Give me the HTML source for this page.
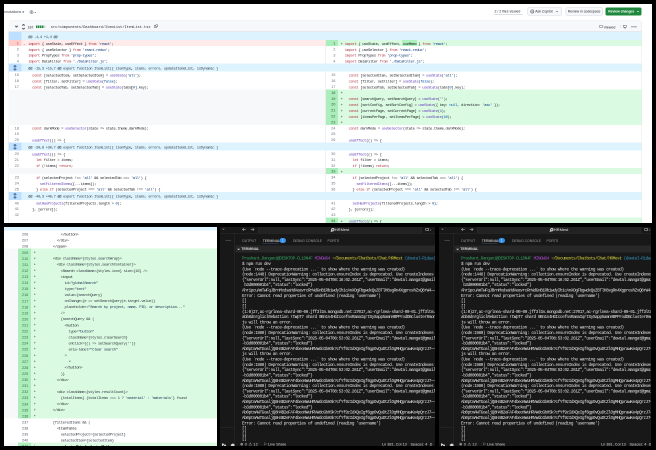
<!DOCTYPE html><html><head><meta charset='utf-8'><style>
*{box-sizing:border-box;margin:0;padding:0}
html,body{width:656px;height:450px;overflow:hidden;background:#000}
.a{position:absolute}
.t{position:absolute;white-space:pre;line-height:1}
.b{font-weight:bold}
.m{font-family:'Liberation Mono',monospace}
.s{font-family:'Liberation Sans',sans-serif}
.k{color:#b03a46}.f{color:#6a45b8}.st{color:#0f3b7a}.c{color:#1f2328}.n{color:#0550ae}
</style></head><body>
<div class='a' style='left:4px;top:4px;width:1296.000px;height:438.000px;background:#fff;overflow:hidden;transform:scale(0.500000);transform-origin:0 0;will-change:transform'>
<div class='t s' style='left:0.400px;top:12.400px;font-size:7.400px;color:#3d444d'>nnotations</div>
<svg class='a' style='left:36.400px;top:14.600px' width='4.800' height='3.200' viewBox='0 0 2.4 1.6'><path d='M0 0H2.4L1.2 1.4Z' fill='#3d444d'/></svg>
<svg class='a' style='left:49.600px;top:11.200px' width='10.000' height='10.000' viewBox='0 0 5 5'><circle cx='2.5' cy='2.5' r='1.5' stroke='#6e7781' stroke-width='0.900' fill='none' stroke-dasharray='0.6 0.4'/><circle cx='2.5' cy='2.5' r='0.45' fill='none' stroke='#6e7781' stroke-width='0.600'/></svg>
<svg class='a' style='left:60.800px;top:16.000px' width='3.200' height='2.400' viewBox='0 0 1.6 1.2'><path d='M0 0H1.6L0.8 1.1Z' fill='#59636e'/></svg>
<div class='t s' style='left:981.000px;top:11.200px;font-size:7.000px;color:#25292e'>2 / 2 files viewed</div>
<div class='a' style='left:979.000px;top:19.600px;width:58.000px;height:1.400px;background:#b8bec4'></div>
<div class='a' style='left:1047.000px;top:6.600px;width:69.000px;height:16.400px;border:1.000px solid #d1d9e0;border-radius:3.000px;background:#f6f8fa'></div>
<svg class='a' style='left:1052.400px;top:10.800px' width='8.800' height='8.000' viewBox='0 0 4.4 4'><circle cx='2.2' cy='2' r='1.6' stroke='#6e7781' stroke-width='0.700' fill='none'/><path d='M1.3 2.3H3.1' stroke='#6e7781' stroke-width='0.600'/></svg>
<div class='t s' style='left:1062.400px;top:12.400px;font-size:6.900px;color:#25292e'>Ask Copilot</div>
<svg class='a' style='left:1104.000px;top:14.400px' width='4.000' height='2.800' viewBox='0 0 2 1.4'><path d='M0 0H2L1 1.2Z' fill='#59636e'/></svg>
<div class='a' style='left:1123.200px;top:6.600px;width:74.800px;height:16.400px;border:1.000px solid #d1d9e0;border-radius:3.000px;background:#f6f8fa'></div>
<div class='t s' style='left:1127.600px;top:12.400px;font-size:6.900px;color:#25292e'>Review in codespace</div>
<div class='a' style='left:1203.400px;top:6.600px;width:72.000px;height:16.400px;border-radius:3.000px;background:#1f883d'></div>
<div class='t s' style='left:1208.400px;top:12.400px;font-size:6.700px;color:#fff;font-weight:bold'>Review changes</div>
<svg class='a' style='left:1266.400px;top:14.400px' width='4.000' height='2.800' viewBox='0 0 2 1.4'><path d='M0 0H2L1 1.2Z' fill='#fff'/></svg>
<div class='a' style='left:8.600px;top:33.000px;width:1267.400px;height:410.000px;border:1.000px solid #e3e7eb;border-radius:4.000px 4.000px 0 0'></div>
<div class='a' style='left:9.200px;top:33.600px;width:1266.000px;height:22.600px;background:#f6f8fa;border-bottom:1.200px solid #d1d9e0'></div>
<svg class='a' style='left:21.600px;top:42.800px' width='6.000' height='4.000' viewBox='0 0 3 2'><path d='M0.3 0.3L1.5 1.5L2.7 0.3' stroke='#59636e' stroke-width='1.200' fill='none'/></svg>
<svg class='a' style='left:35.600px;top:39.600px' width='6.000' height='11.200' viewBox='0 0 3 5.6'><path d='M0.3 1.6L1.5 0.4L2.7 1.6M0.3 4L1.5 5.2L2.7 4' stroke='#59636e' stroke-width='1.100' fill='none'/></svg>
<div class='t s' style='left:47.000px;top:42.800px;font-size:7.200px;color:#1f2328'>187</div>
<div class='a' style='left:63.600px;top:43.200px;width:3.400px;height:4.800px;background:#1f883d'></div>
<div class='a' style='left:67.700px;top:43.200px;width:3.400px;height:4.800px;background:#1f883d'></div>
<div class='a' style='left:71.800px;top:43.200px;width:3.400px;height:4.800px;background:#1f883d'></div>
<div class='a' style='left:75.900px;top:43.200px;width:3.400px;height:4.800px;background:#1f883d'></div>
<div class='a' style='left:80.000px;top:43.200px;width:3.400px;height:4.800px;background:#d1d9e0'></div>
<div class='t m' style='left:93.400px;top:43.000px;font-size:7.240px;color:#1f2328'>src/components/Dashboard/ItemList/ItemList.tsx</div>
<div class='a' style='left:300.400px;top:42.400px;width:5.600px;height:5.600px;border:0.900px solid #59636e;border-radius:1.000px'></div>
<div class='a' style='left:302.800px;top:40.800px;width:4.800px;height:4.800px;border:0.900px solid #59636e;border-radius:1.000px;background:#f6f8fa'></div>
<div class='a' style='left:1191.200px;top:42.400px;width:6.000px;height:6.000px;border:0.900px solid #59636e;border-radius:1.000px;background:#fff'></div>
<div class='t s' style='left:1199.200px;top:42.800px;font-size:7.200px;color:#1f2328'>Viewed</div>
<div class='a' style='left:1231.600px;top:41.200px;width:1.000px;height:8.000px;background:#d1d9e0'></div>
<div class='a' style='left:1238.400px;top:42.200px;width:6.800px;height:5.200px;border:0.900px solid #59636e;border-radius:0.800px'></div>
<div class='a' style='left:1240.800px;top:47.200px;width:2.000px;height:1.600px;background:#59636e'></div>
<div class='a' style='left:1254.800px;top:44.400px;width:2.200px;height:2.200px;border-radius:1.100px;background:#59636e'></div>
<div class='a' style='left:1259.000px;top:44.400px;width:2.200px;height:2.200px;border-radius:1.100px;background:#59636e'></div>
<div class='a' style='left:1263.200px;top:44.400px;width:2.200px;height:2.200px;border-radius:1.100px;background:#59636e'></div>
<div class='a' style='left:9.200px;top:56.200px;width:1266.200px;height:16.000px;background:#ddf4ff'></div>
<div class='a' style='left:9.200px;top:56.200px;width:26.200px;height:16.000px;background:#bedfff'></div>
<div class='t m' style='left:48.600px;top:62.800px;font-size:7.700px;letter-spacing:-0.740px;color:#3b4450'>@@ -1,4 +1,4 @@</div>
<div class='a' style='left:9.200px;top:72.200px;width:633.400px;height:11.800px;background:#ffebe9'></div>
<div class='a' style='left:9.200px;top:72.200px;width:26.200px;height:11.800px;background:#ffcecb'></div>
<div class='t s' style='left:9.200px;width:20.600px;text-align:right;top:75.200px;font-size:7.800px;letter-spacing:-0.100px;color:#a8454e'>1</div>
<div class='t m' style='left:38.400px;top:76.800px;font-size:7.700px;letter-spacing:-0.740px;color:#1f2328'>-</div>
<div class='t m c' style='left:48.600px;top:76.800px;font-size:7.700px;letter-spacing:-0.740px'><span class='k'>import</span> { useState, useEffect } <span class='k'>from</span> <span class='st'>&#x27;react&#x27;</span>;</div>
<div class='a' style='left:642.600px;top:72.200px;width:632.800px;height:11.800px;background:#dafbe1'></div>
<div class='a' style='left:642.600px;top:72.200px;width:25.000px;height:11.800px;background:#aceebb'></div>
<div class='a' style='left:795.600px;top:72.400px;width:30.000px;height:11.200px;background:#abf2bc;border-radius:1.200px'></div>
<div class='t s' style='left:642.600px;width:20.200px;text-align:right;top:75.200px;font-size:7.800px;letter-spacing:-0.100px;color:#2f5e3d'>1</div>
<div class='t m' style='left:673.200px;top:76.800px;font-size:7.700px;letter-spacing:-0.740px;color:#1f2328'>+</div>
<div class='t m c' style='left:681.600px;top:76.800px;font-size:7.700px;letter-spacing:-0.740px'><span class='k'>import</span> { useState, useEffect, useMemo } <span class='k'>from</span> <span class='st'>&#x27;react&#x27;</span>;</div>
<div class='t s' style='left:9.200px;width:20.600px;text-align:right;top:87.000px;font-size:7.800px;letter-spacing:-0.100px;color:#6e7781'>2</div>
<div class='t m c' style='left:48.600px;top:88.600px;font-size:7.700px;letter-spacing:-0.740px'><span class='k'>import</span> { useSelector } <span class='k'>from</span> <span class='st'>&#x27;react-redux&#x27;</span>;</div>
<div class='t s' style='left:642.600px;width:20.200px;text-align:right;top:87.000px;font-size:7.800px;letter-spacing:-0.100px;color:#6e7781'>2</div>
<div class='t m c' style='left:681.600px;top:88.600px;font-size:7.700px;letter-spacing:-0.740px'><span class='k'>import</span> { useSelector } <span class='k'>from</span> <span class='st'>&#x27;react-redux&#x27;</span>;</div>
<div class='t s' style='left:9.200px;width:20.600px;text-align:right;top:98.800px;font-size:7.800px;letter-spacing:-0.100px;color:#6e7781'>3</div>
<div class='t m c' style='left:48.600px;top:100.400px;font-size:7.700px;letter-spacing:-0.740px'><span class='k'>import</span> PropTypes <span class='k'>from</span> <span class='st'>&#x27;prop-types&#x27;</span>;</div>
<div class='t s' style='left:642.600px;width:20.200px;text-align:right;top:98.800px;font-size:7.800px;letter-spacing:-0.100px;color:#6e7781'>3</div>
<div class='t m c' style='left:681.600px;top:100.400px;font-size:7.700px;letter-spacing:-0.740px'><span class='k'>import</span> PropTypes <span class='k'>from</span> <span class='st'>&#x27;prop-types&#x27;</span>;</div>
<div class='t s' style='left:9.200px;width:20.600px;text-align:right;top:110.600px;font-size:7.800px;letter-spacing:-0.100px;color:#6e7781'>4</div>
<div class='t m c' style='left:48.600px;top:112.200px;font-size:7.700px;letter-spacing:-0.740px'><span class='k'>import</span> DataFilter <span class='k'>from</span> <span class='st'>&#x27;./DataFilter.js&#x27;</span>;</div>
<div class='t s' style='left:642.600px;width:20.200px;text-align:right;top:110.600px;font-size:7.800px;letter-spacing:-0.100px;color:#6e7781'>4</div>
<div class='t m c' style='left:681.600px;top:112.200px;font-size:7.700px;letter-spacing:-0.740px'><span class='k'>import</span> DataFilter <span class='k'>from</span> <span class='st'>&#x27;./DataFilter.js&#x27;</span>;</div>
<div class='a' style='left:9.200px;top:119.400px;width:1266.200px;height:16.000px;background:#ddf4ff'></div>
<div class='a' style='left:9.200px;top:119.400px;width:26.200px;height:16.000px;background:#bedfff'></div>
<svg class='a' style='left:18.400px;top:122.200px' width='8.000' height='11.200' viewBox='0 0 4 5.6'><path d='M2 0.3V5.3M0.6 1.7L2 0.3L3.4 1.7M0.6 3.9L2 5.3L3.4 3.9' stroke='#4a6f93' stroke-width='0.900' fill='none'/></svg>
<div class='t m' style='left:48.600px;top:126.000px;font-size:7.700px;letter-spacing:-0.740px;color:#3b4450'>@@ -15,3 +15,7 @@ export function ItemList({ itemType, items, errors, updateItemsList, isDynamic }</div>
<div class='t s' style='left:9.200px;width:20.600px;text-align:right;top:138.400px;font-size:7.800px;letter-spacing:-0.100px;color:#6e7781'>15</div>
<div class='t m c' style='left:48.600px;top:140.000px;font-size:7.700px;letter-spacing:-0.740px'>  <span class='k'>const</span> [selectedItem, setSelectedItem] = <span class='f'>useState</span>(<span class='st'>&#x27;all&#x27;</span>);</div>
<div class='t s' style='left:642.600px;width:20.200px;text-align:right;top:138.400px;font-size:7.800px;letter-spacing:-0.100px;color:#6e7781'>15</div>
<div class='t m c' style='left:681.600px;top:140.000px;font-size:7.700px;letter-spacing:-0.740px'>  <span class='k'>const</span> [selectedItem, setSelectedItem] = <span class='f'>useState</span>(<span class='st'>&#x27;all&#x27;</span>);</div>
<div class='t s' style='left:9.200px;width:20.600px;text-align:right;top:150.200px;font-size:7.800px;letter-spacing:-0.100px;color:#6e7781'>16</div>
<div class='t m c' style='left:48.600px;top:151.800px;font-size:7.700px;letter-spacing:-0.740px'>  <span class='k'>const</span> [filter, setFilter] = <span class='f'>useState</span>(<span class='n'>false</span>);</div>
<div class='t s' style='left:642.600px;width:20.200px;text-align:right;top:150.200px;font-size:7.800px;letter-spacing:-0.100px;color:#6e7781'>16</div>
<div class='t m c' style='left:681.600px;top:151.800px;font-size:7.700px;letter-spacing:-0.740px'>  <span class='k'>const</span> [filter, setFilter] = <span class='f'>useState</span>(<span class='n'>false</span>);</div>
<div class='t s' style='left:9.200px;width:20.600px;text-align:right;top:162.000px;font-size:7.800px;letter-spacing:-0.100px;color:#6e7781'>17</div>
<div class='t m c' style='left:48.600px;top:163.600px;font-size:7.700px;letter-spacing:-0.740px'>  <span class='k'>const</span> [selectedTab, setSelectedTab] = <span class='f'>useState</span>(tabs[<span class='n'>0</span>].key);</div>
<div class='t s' style='left:642.600px;width:20.200px;text-align:right;top:162.000px;font-size:7.800px;letter-spacing:-0.100px;color:#6e7781'>17</div>
<div class='t m c' style='left:681.600px;top:163.600px;font-size:7.700px;letter-spacing:-0.740px'>  <span class='k'>const</span> [selectedTab, setSelectedTab] = <span class='f'>useState</span>(tabs[<span class='n'>0</span>].key);</div>
<div class='a' style='left:9.200px;top:170.800px;width:633.400px;height:11.800px;background:#f6f8fa'></div>
<div class='a' style='left:642.600px;top:170.800px;width:632.800px;height:11.800px;background:#dafbe1'></div>
<div class='a' style='left:642.600px;top:170.800px;width:25.000px;height:11.800px;background:#aceebb'></div>
<div class='t s' style='left:642.600px;width:20.200px;text-align:right;top:173.800px;font-size:7.800px;letter-spacing:-0.100px;color:#2f5e3d'>18</div>
<div class='t m' style='left:673.200px;top:175.400px;font-size:7.700px;letter-spacing:-0.740px;color:#1f2328'>+</div>
<div class='t m c' style='left:681.600px;top:175.400px;font-size:7.700px;letter-spacing:-0.740px'></div>
<div class='a' style='left:9.200px;top:182.600px;width:633.400px;height:11.800px;background:#f6f8fa'></div>
<div class='a' style='left:642.600px;top:182.600px;width:632.800px;height:11.800px;background:#dafbe1'></div>
<div class='a' style='left:642.600px;top:182.600px;width:25.000px;height:11.800px;background:#aceebb'></div>
<div class='t s' style='left:642.600px;width:20.200px;text-align:right;top:185.600px;font-size:7.800px;letter-spacing:-0.100px;color:#2f5e3d'>19</div>
<div class='t m' style='left:673.200px;top:187.200px;font-size:7.700px;letter-spacing:-0.740px;color:#1f2328'>+</div>
<div class='t m c' style='left:681.600px;top:187.200px;font-size:7.700px;letter-spacing:-0.740px'>  <span class='k'>const</span> [searchQuery, setSearchQuery] = <span class='f'>useState</span>(<span class='st'>&#x27;&#x27;</span>);</div>
<div class='a' style='left:9.200px;top:194.400px;width:633.400px;height:11.800px;background:#f6f8fa'></div>
<div class='a' style='left:642.600px;top:194.400px;width:632.800px;height:11.800px;background:#dafbe1'></div>
<div class='a' style='left:642.600px;top:194.400px;width:25.000px;height:11.800px;background:#aceebb'></div>
<div class='t s' style='left:642.600px;width:20.200px;text-align:right;top:197.400px;font-size:7.800px;letter-spacing:-0.100px;color:#2f5e3d'>20</div>
<div class='t m' style='left:673.200px;top:199.000px;font-size:7.700px;letter-spacing:-0.740px;color:#1f2328'>+</div>
<div class='t m c' style='left:681.600px;top:199.000px;font-size:7.700px;letter-spacing:-0.740px'>  <span class='k'>const</span> [sortConfig, setSortConfig] = <span class='f'>useState</span>({ key: <span class='n'>null</span>, direction: <span class='st'>&#x27;asc&#x27;</span> });</div>
<div class='a' style='left:9.200px;top:206.200px;width:633.400px;height:11.800px;background:#f6f8fa'></div>
<div class='a' style='left:642.600px;top:206.200px;width:632.800px;height:11.800px;background:#dafbe1'></div>
<div class='a' style='left:642.600px;top:206.200px;width:25.000px;height:11.800px;background:#aceebb'></div>
<div class='t s' style='left:642.600px;width:20.200px;text-align:right;top:209.200px;font-size:7.800px;letter-spacing:-0.100px;color:#2f5e3d'>21</div>
<div class='t m' style='left:673.200px;top:210.800px;font-size:7.700px;letter-spacing:-0.740px;color:#1f2328'>+</div>
<div class='t m c' style='left:681.600px;top:210.800px;font-size:7.700px;letter-spacing:-0.740px'>  <span class='k'>const</span> [currentPage, setCurrentPage] = <span class='f'>useState</span>(<span class='n'>1</span>);</div>
<div class='a' style='left:9.200px;top:218.000px;width:633.400px;height:11.800px;background:#f6f8fa'></div>
<div class='a' style='left:642.600px;top:218.000px;width:632.800px;height:11.800px;background:#dafbe1'></div>
<div class='a' style='left:642.600px;top:218.000px;width:25.000px;height:11.800px;background:#aceebb'></div>
<div class='t s' style='left:642.600px;width:20.200px;text-align:right;top:221.000px;font-size:7.800px;letter-spacing:-0.100px;color:#2f5e3d'>22</div>
<div class='t m' style='left:673.200px;top:222.600px;font-size:7.700px;letter-spacing:-0.740px;color:#1f2328'>+</div>
<div class='t m c' style='left:681.600px;top:222.600px;font-size:7.700px;letter-spacing:-0.740px'>  <span class='k'>const</span> [itemsPerPage, setItemsPerPage] = <span class='f'>useState</span>(<span class='n'>1</span><span class='n'>0</span>);</div>
<div class='a' style='left:9.200px;top:229.800px;width:633.400px;height:11.800px;background:#f6f8fa'></div>
<div class='a' style='left:642.600px;top:229.800px;width:632.800px;height:11.800px;background:#dafbe1'></div>
<div class='a' style='left:642.600px;top:229.800px;width:25.000px;height:11.800px;background:#aceebb'></div>
<div class='t s' style='left:642.600px;width:20.200px;text-align:right;top:232.800px;font-size:7.800px;letter-spacing:-0.100px;color:#2f5e3d'>23</div>
<div class='t m' style='left:673.200px;top:234.400px;font-size:7.700px;letter-spacing:-0.740px;color:#1f2328'>+</div>
<div class='t m c' style='left:681.600px;top:234.400px;font-size:7.700px;letter-spacing:-0.740px'></div>
<div class='t s' style='left:9.200px;width:20.600px;text-align:right;top:244.600px;font-size:7.800px;letter-spacing:-0.100px;color:#6e7781'>18</div>
<div class='t m c' style='left:48.600px;top:246.200px;font-size:7.700px;letter-spacing:-0.740px'>  <span class='k'>const</span> darkMode = <span class='f'>useSelector</span>(state =&gt; state.theme.darkMode);</div>
<div class='t s' style='left:642.600px;width:20.200px;text-align:right;top:244.600px;font-size:7.800px;letter-spacing:-0.100px;color:#6e7781'>24</div>
<div class='t m c' style='left:681.600px;top:246.200px;font-size:7.700px;letter-spacing:-0.740px'>  <span class='k'>const</span> darkMode = <span class='f'>useSelector</span>(state =&gt; state.theme.darkMode);</div>
<div class='t s' style='left:9.200px;width:20.600px;text-align:right;top:256.400px;font-size:7.800px;letter-spacing:-0.100px;color:#6e7781'>19</div>
<div class='t m c' style='left:48.600px;top:258.000px;font-size:7.700px;letter-spacing:-0.740px'></div>
<div class='t s' style='left:642.600px;width:20.200px;text-align:right;top:256.400px;font-size:7.800px;letter-spacing:-0.100px;color:#6e7781'>25</div>
<div class='t m c' style='left:681.600px;top:258.000px;font-size:7.700px;letter-spacing:-0.740px'></div>
<div class='t s' style='left:9.200px;width:20.600px;text-align:right;top:268.200px;font-size:7.800px;letter-spacing:-0.100px;color:#6e7781'>20</div>
<div class='t m c' style='left:48.600px;top:269.800px;font-size:7.700px;letter-spacing:-0.740px'>  <span class='f'>useEffect</span>(() =&gt; {</div>
<div class='t s' style='left:642.600px;width:20.200px;text-align:right;top:268.200px;font-size:7.800px;letter-spacing:-0.100px;color:#6e7781'>26</div>
<div class='t m c' style='left:681.600px;top:269.800px;font-size:7.700px;letter-spacing:-0.740px'>  <span class='f'>useEffect</span>(() =&gt; {</div>
<div class='a' style='left:9.200px;top:277.000px;width:1266.200px;height:16.000px;background:#ddf4ff'></div>
<div class='a' style='left:9.200px;top:277.000px;width:26.200px;height:16.000px;background:#bedfff'></div>
<svg class='a' style='left:18.400px;top:279.800px' width='8.000' height='11.200' viewBox='0 0 4 5.6'><path d='M2 0.3V5.3M0.6 1.7L2 0.3L3.4 1.7M0.6 3.9L2 5.3L3.4 3.9' stroke='#4a6f93' stroke-width='0.900' fill='none'/></svg>
<div class='t m' style='left:48.600px;top:283.600px;font-size:7.700px;letter-spacing:-0.740px;color:#3b4450'>@@ -20,8 +30,7 @@ export function ItemList({ itemType, items, errors, updateItemsList, isDynamic }</div>
<div class='t s' style='left:9.200px;width:20.600px;text-align:right;top:296.000px;font-size:7.800px;letter-spacing:-0.100px;color:#6e7781'>20</div>
<div class='t m c' style='left:48.600px;top:297.600px;font-size:7.700px;letter-spacing:-0.740px'>  <span class='f'>useEffect</span>(() =&gt; {</div>
<div class='t s' style='left:642.600px;width:20.200px;text-align:right;top:296.000px;font-size:7.800px;letter-spacing:-0.100px;color:#6e7781'>30</div>
<div class='t m c' style='left:681.600px;top:297.600px;font-size:7.700px;letter-spacing:-0.740px'>  <span class='f'>useEffect</span>(() =&gt; {</div>
<div class='t s' style='left:9.200px;width:20.600px;text-align:right;top:307.800px;font-size:7.800px;letter-spacing:-0.100px;color:#6e7781'>21</div>
<div class='t m c' style='left:48.600px;top:309.400px;font-size:7.700px;letter-spacing:-0.740px'>    <span class='k'>let</span> filter = items;</div>
<div class='t s' style='left:642.600px;width:20.200px;text-align:right;top:307.800px;font-size:7.800px;letter-spacing:-0.100px;color:#6e7781'>31</div>
<div class='t m c' style='left:681.600px;top:309.400px;font-size:7.700px;letter-spacing:-0.740px'>    <span class='k'>let</span> filter = items;</div>
<div class='t s' style='left:9.200px;width:20.600px;text-align:right;top:319.600px;font-size:7.800px;letter-spacing:-0.100px;color:#6e7781'>22</div>
<div class='t m c' style='left:48.600px;top:321.200px;font-size:7.700px;letter-spacing:-0.740px'>    <span class='k'>if</span> (!items) <span class='k'>return</span>;</div>
<div class='t s' style='left:642.600px;width:20.200px;text-align:right;top:319.600px;font-size:7.800px;letter-spacing:-0.100px;color:#6e7781'>32</div>
<div class='t m c' style='left:681.600px;top:321.200px;font-size:7.700px;letter-spacing:-0.740px'>    <span class='k'>if</span> (!items) <span class='k'>return</span>;</div>
<div class='a' style='left:9.200px;top:328.400px;width:633.400px;height:11.800px;background:#f6f8fa'></div>
<div class='a' style='left:642.600px;top:328.400px;width:632.800px;height:11.800px;background:#dafbe1'></div>
<div class='a' style='left:642.600px;top:328.400px;width:25.000px;height:11.800px;background:#aceebb'></div>
<div class='t s' style='left:642.600px;width:20.200px;text-align:right;top:331.400px;font-size:7.800px;letter-spacing:-0.100px;color:#2f5e3d'>33</div>
<div class='t m' style='left:673.200px;top:333.000px;font-size:7.700px;letter-spacing:-0.740px;color:#1f2328'>+</div>
<div class='t m c' style='left:681.600px;top:333.000px;font-size:7.700px;letter-spacing:-0.740px'></div>
<div class='t s' style='left:9.200px;width:20.600px;text-align:right;top:343.200px;font-size:7.800px;letter-spacing:-0.100px;color:#6e7781'>23</div>
<div class='t m c' style='left:48.600px;top:344.800px;font-size:7.700px;letter-spacing:-0.740px'>    <span class='k'>if</span> (selectedProject !== <span class='st'>&#x27;all&#x27;</span> &amp;&amp; selectedTab === <span class='st'>&#x27;all&#x27;</span>) {</div>
<div class='t s' style='left:642.600px;width:20.200px;text-align:right;top:343.200px;font-size:7.800px;letter-spacing:-0.100px;color:#6e7781'>34</div>
<div class='t m c' style='left:681.600px;top:344.800px;font-size:7.700px;letter-spacing:-0.740px'>    <span class='k'>if</span> (selectedProject !== <span class='st'>&#x27;all&#x27;</span> &amp;&amp; selectedTab === <span class='st'>&#x27;all&#x27;</span>) {</div>
<div class='t s' style='left:9.200px;width:20.600px;text-align:right;top:355.000px;font-size:7.800px;letter-spacing:-0.100px;color:#6e7781'>24</div>
<div class='t m c' style='left:48.600px;top:356.600px;font-size:7.700px;letter-spacing:-0.740px'>      <span class='f'>setFilteredItems</span>([...items]);</div>
<div class='t s' style='left:642.600px;width:20.200px;text-align:right;top:355.000px;font-size:7.800px;letter-spacing:-0.100px;color:#6e7781'>35</div>
<div class='t m c' style='left:681.600px;top:356.600px;font-size:7.700px;letter-spacing:-0.740px'>      <span class='f'>setFilteredItems</span>([...items]);</div>
<div class='t s' style='left:9.200px;width:20.600px;text-align:right;top:366.800px;font-size:7.800px;letter-spacing:-0.100px;color:#6e7781'>25</div>
<div class='t m c' style='left:48.600px;top:368.400px;font-size:7.700px;letter-spacing:-0.740px'>    } <span class='k'>else</span> <span class='k'>if</span> (selectedProject === <span class='st'>&#x27;all&#x27;</span> &amp;&amp; selectedTab !== <span class='st'>&#x27;all&#x27;</span>) {</div>
<div class='t s' style='left:642.600px;width:20.200px;text-align:right;top:366.800px;font-size:7.800px;letter-spacing:-0.100px;color:#6e7781'>36</div>
<div class='t m c' style='left:681.600px;top:368.400px;font-size:7.700px;letter-spacing:-0.740px'>    } <span class='k'>else</span> <span class='k'>if</span> (selectedProject === <span class='st'>&#x27;all&#x27;</span> &amp;&amp; selectedTab !== <span class='st'>&#x27;all&#x27;</span>) {</div>
<div class='a' style='left:9.200px;top:375.600px;width:1266.200px;height:16.000px;background:#ddf4ff'></div>
<div class='a' style='left:9.200px;top:375.600px;width:26.200px;height:16.000px;background:#bedfff'></div>
<svg class='a' style='left:18.400px;top:378.400px' width='8.000' height='11.200' viewBox='0 0 4 5.6'><path d='M2 0.3V5.3M0.6 1.7L2 0.3L3.4 1.7M0.6 3.9L2 5.3L3.4 3.9' stroke='#4a6f93' stroke-width='0.900' fill='none'/></svg>
<div class='t m' style='left:48.600px;top:382.200px;font-size:7.700px;letter-spacing:-0.740px;color:#3b4450'>@@ -40,3 +40,7 @@ export function ItemList({ itemType, items, errors, updateItemsList, isDynamic }</div>
<div class='t s' style='left:9.200px;width:20.600px;text-align:right;top:394.600px;font-size:7.800px;letter-spacing:-0.100px;color:#6e7781'>40</div>
<div class='t m c' style='left:48.600px;top:396.200px;font-size:7.700px;letter-spacing:-0.740px'>    <span class='f'>setHasProjects</span>(filteredProjects.length &gt; <span class='n'>0</span>);</div>
<div class='t s' style='left:642.600px;width:20.200px;text-align:right;top:394.600px;font-size:7.800px;letter-spacing:-0.100px;color:#6e7781'>41</div>
<div class='t m c' style='left:681.600px;top:396.200px;font-size:7.700px;letter-spacing:-0.740px'>    <span class='f'>setHasProjects</span>(filteredProjects.length &gt; <span class='n'>0</span>);</div>
<div class='t s' style='left:9.200px;width:20.600px;text-align:right;top:406.400px;font-size:7.800px;letter-spacing:-0.100px;color:#6e7781'>41</div>
<div class='t m c' style='left:48.600px;top:408.000px;font-size:7.700px;letter-spacing:-0.740px'>  }, [errors]);</div>
<div class='t s' style='left:642.600px;width:20.200px;text-align:right;top:406.400px;font-size:7.800px;letter-spacing:-0.100px;color:#6e7781'>42</div>
<div class='t m c' style='left:681.600px;top:408.000px;font-size:7.700px;letter-spacing:-0.740px'>  }, [errors]);</div>
<div class='t s' style='left:9.200px;width:20.600px;text-align:right;top:418.200px;font-size:7.800px;letter-spacing:-0.100px;color:#6e7781'>42</div>
<div class='t m c' style='left:48.600px;top:419.800px;font-size:7.700px;letter-spacing:-0.740px'></div>
<div class='t s' style='left:642.600px;width:20.200px;text-align:right;top:418.200px;font-size:7.800px;letter-spacing:-0.100px;color:#6e7781'>43</div>
<div class='t m c' style='left:681.600px;top:419.800px;font-size:7.700px;letter-spacing:-0.740px'></div>
<div class='t s' style='left:9.200px;width:20.600px;text-align:right;top:430.000px;font-size:7.800px;letter-spacing:-0.100px;color:#6e7781'></div>
<div class='t m c' style='left:48.600px;top:431.600px;font-size:7.700px;letter-spacing:-0.740px'></div>
<div class='a' style='left:642.600px;top:427.000px;width:632.800px;height:11.800px;background:#dafbe1'></div>
<div class='a' style='left:642.600px;top:427.000px;width:25.000px;height:11.800px;background:#aceebb'></div>
<div class='t s' style='left:642.600px;width:20.200px;text-align:right;top:430.000px;font-size:7.800px;letter-spacing:-0.100px;color:#2f5e3d'>44</div>
<div class='t m' style='left:673.200px;top:431.600px;font-size:7.700px;letter-spacing:-0.740px;color:#1f2328'>+</div>
<div class='t m c' style='left:681.600px;top:431.600px;font-size:7.700px;letter-spacing:-0.740px'>  <span class='f'>useEffect</span>(() =&gt; {</div>
<div class='a' style='left:642.600px;top:72.200px;width:1.000px;height:11.800px;background:#dfe3e8'></div>
<div class='a' style='left:642.600px;top:84.000px;width:1.000px;height:11.800px;background:#dfe3e8'></div>
<div class='a' style='left:642.600px;top:95.800px;width:1.000px;height:11.800px;background:#dfe3e8'></div>
<div class='a' style='left:642.600px;top:107.600px;width:1.000px;height:11.800px;background:#dfe3e8'></div>
<div class='a' style='left:642.600px;top:135.400px;width:1.000px;height:11.800px;background:#dfe3e8'></div>
<div class='a' style='left:642.600px;top:147.200px;width:1.000px;height:11.800px;background:#dfe3e8'></div>
<div class='a' style='left:642.600px;top:159.000px;width:1.000px;height:11.800px;background:#dfe3e8'></div>
<div class='a' style='left:642.600px;top:170.800px;width:1.000px;height:11.800px;background:#dfe3e8'></div>
<div class='a' style='left:642.600px;top:182.600px;width:1.000px;height:11.800px;background:#dfe3e8'></div>
<div class='a' style='left:642.600px;top:194.400px;width:1.000px;height:11.800px;background:#dfe3e8'></div>
<div class='a' style='left:642.600px;top:206.200px;width:1.000px;height:11.800px;background:#dfe3e8'></div>
<div class='a' style='left:642.600px;top:218.000px;width:1.000px;height:11.800px;background:#dfe3e8'></div>
<div class='a' style='left:642.600px;top:229.800px;width:1.000px;height:11.800px;background:#dfe3e8'></div>
<div class='a' style='left:642.600px;top:241.600px;width:1.000px;height:11.800px;background:#dfe3e8'></div>
<div class='a' style='left:642.600px;top:253.400px;width:1.000px;height:11.800px;background:#dfe3e8'></div>
<div class='a' style='left:642.600px;top:265.200px;width:1.000px;height:11.800px;background:#dfe3e8'></div>
<div class='a' style='left:642.600px;top:293.000px;width:1.000px;height:11.800px;background:#dfe3e8'></div>
<div class='a' style='left:642.600px;top:304.800px;width:1.000px;height:11.800px;background:#dfe3e8'></div>
<div class='a' style='left:642.600px;top:316.600px;width:1.000px;height:11.800px;background:#dfe3e8'></div>
<div class='a' style='left:642.600px;top:328.400px;width:1.000px;height:11.800px;background:#dfe3e8'></div>
<div class='a' style='left:642.600px;top:340.200px;width:1.000px;height:11.800px;background:#dfe3e8'></div>
<div class='a' style='left:642.600px;top:352.000px;width:1.000px;height:11.800px;background:#dfe3e8'></div>
<div class='a' style='left:642.600px;top:363.800px;width:1.000px;height:11.800px;background:#dfe3e8'></div>
<div class='a' style='left:642.600px;top:391.600px;width:1.000px;height:11.800px;background:#dfe3e8'></div>
<div class='a' style='left:642.600px;top:403.400px;width:1.000px;height:11.800px;background:#dfe3e8'></div>
<div class='a' style='left:642.600px;top:415.200px;width:1.000px;height:11.800px;background:#dfe3e8'></div>
<div class='a' style='left:642.600px;top:427.000px;width:1.000px;height:11.800px;background:#dfe3e8'></div>
</div>
<div class='a' style='left:4.1px;top:227.2px;width:426.000px;height:437.000px;background:#fff;overflow:hidden;transform:scale(0.500000);transform-origin:0 0;will-change:transform'>
<div class='a' style='left:0;top:0;width:426.000px;height:6.800px;background:#ddf4ff'></div>
<div class='t s' style='left:28.400px;width:19.800px;text-align:right;top:11.200px;font-size:7.600px;letter-spacing:-0.200px;color:#57606a'>206</div>
<div class='t m' style='left:81.800px;top:10.800px;font-size:8.000px;letter-spacing:-0.870px;color:#3d444d'>        <span style='color:#24292f'>&lt;/button</span>&gt;</div>
<div class='t s' style='left:28.400px;width:19.800px;text-align:right;top:23.320px;font-size:7.600px;letter-spacing:-0.200px;color:#57606a'>207</div>
<div class='t m' style='left:81.800px;top:22.920px;font-size:8.000px;letter-spacing:-0.870px;color:#3d444d'>      <span style='color:#24292f'>&lt;/div</span>&gt;</div>
<div class='t s' style='left:28.400px;width:19.800px;text-align:right;top:35.440px;font-size:7.600px;letter-spacing:-0.200px;color:#57606a'>208</div>
<div class='t m' style='left:81.800px;top:35.040px;font-size:8.000px;letter-spacing:-0.870px;color:#3d444d'>    <span style='color:#24292f'>&lt;/span</span>&gt;</div>
<div class='a' style='left:28.400px;top:43.160px;width:397.600px;height:12.120px;background:#dafbe1'></div>
<div class='a' style='left:28.400px;top:43.160px;width:25.600px;height:12.120px;background:#aceebb'></div>
<div class='a' style='left:0;top:43.160px;width:28.400px;height:12.120px;background:#f6f8fa'></div>
<div class='t s' style='left:59.400px;top:46.560px;font-size:7.200px;color:#1f2328'>+</div>
<div class='t s' style='left:28.400px;width:19.800px;text-align:right;top:47.560px;font-size:7.600px;letter-spacing:-0.200px;color:#3b6e4a'>209</div>
<div class='t m' style='left:81.800px;top:47.160px;font-size:8.000px;letter-spacing:-0.870px;color:#3d444d'></div>
<div class='a' style='left:28.400px;top:55.280px;width:397.600px;height:12.120px;background:#dafbe1'></div>
<div class='a' style='left:28.400px;top:55.280px;width:25.600px;height:12.120px;background:#aceebb'></div>
<div class='a' style='left:0;top:55.280px;width:28.400px;height:12.120px;background:#f6f8fa'></div>
<div class='t s' style='left:59.400px;top:58.680px;font-size:7.200px;color:#1f2328'>+</div>
<div class='t s' style='left:28.400px;width:19.800px;text-align:right;top:59.680px;font-size:7.600px;letter-spacing:-0.200px;color:#3b6e4a'>210</div>
<div class='t m' style='left:81.800px;top:59.280px;font-size:8.000px;letter-spacing:-0.870px;color:#3d444d'>    <span style='color:#24292f'>&lt;div</span> className={styles.searchWrap}&gt;</div>
<div class='a' style='left:28.400px;top:67.400px;width:397.600px;height:12.120px;background:#dafbe1'></div>
<div class='a' style='left:28.400px;top:67.400px;width:25.600px;height:12.120px;background:#aceebb'></div>
<div class='a' style='left:0;top:67.400px;width:28.400px;height:12.120px;background:#f6f8fa'></div>
<div class='t s' style='left:59.400px;top:70.800px;font-size:7.200px;color:#1f2328'>+</div>
<div class='t s' style='left:28.400px;width:19.800px;text-align:right;top:71.800px;font-size:7.600px;letter-spacing:-0.200px;color:#3b6e4a'>211</div>
<div class='t m' style='left:81.800px;top:71.400px;font-size:8.000px;letter-spacing:-0.870px;color:#3d444d'>      <span style='color:#24292f'>&lt;div</span> className={styles.searchContainer}&gt;</div>
<div class='a' style='left:28.400px;top:79.520px;width:397.600px;height:12.120px;background:#dafbe1'></div>
<div class='a' style='left:28.400px;top:79.520px;width:25.600px;height:12.120px;background:#aceebb'></div>
<div class='a' style='left:0;top:79.520px;width:28.400px;height:12.120px;background:#f6f8fa'></div>
<div class='t s' style='left:59.400px;top:82.920px;font-size:7.200px;color:#1f2328'>+</div>
<div class='t s' style='left:28.400px;width:19.800px;text-align:right;top:83.920px;font-size:7.600px;letter-spacing:-0.200px;color:#3b6e4a'>212</div>
<div class='t m' style='left:81.800px;top:83.520px;font-size:8.000px;letter-spacing:-0.870px;color:#3d444d'>        <span style='color:#24292f'>&lt;Search</span> className={styles.icon} size={16} /&gt;</div>
<div class='a' style='left:28.400px;top:91.640px;width:397.600px;height:12.120px;background:#dafbe1'></div>
<div class='a' style='left:28.400px;top:91.640px;width:25.600px;height:12.120px;background:#aceebb'></div>
<div class='a' style='left:0;top:91.640px;width:28.400px;height:12.120px;background:#f6f8fa'></div>
<div class='t s' style='left:59.400px;top:95.040px;font-size:7.200px;color:#1f2328'>+</div>
<div class='t s' style='left:28.400px;width:19.800px;text-align:right;top:96.040px;font-size:7.600px;letter-spacing:-0.200px;color:#3b6e4a'>213</div>
<div class='t m' style='left:81.800px;top:95.640px;font-size:8.000px;letter-spacing:-0.870px;color:#3d444d'>        <span style='color:#24292f'>&lt;input</span></div>
<div class='a' style='left:28.400px;top:103.760px;width:397.600px;height:12.120px;background:#dafbe1'></div>
<div class='a' style='left:28.400px;top:103.760px;width:25.600px;height:12.120px;background:#aceebb'></div>
<div class='a' style='left:0;top:103.760px;width:28.400px;height:12.120px;background:#f6f8fa'></div>
<div class='t s' style='left:59.400px;top:107.160px;font-size:7.200px;color:#1f2328'>+</div>
<div class='t s' style='left:28.400px;width:19.800px;text-align:right;top:108.160px;font-size:7.600px;letter-spacing:-0.200px;color:#3b6e4a'>214</div>
<div class='t m' style='left:81.800px;top:107.760px;font-size:8.000px;letter-spacing:-0.870px;color:#3d444d'>          id=<span style='color:#2a3f5f'>&quot;globalSearch&quot;</span></div>
<div class='a' style='left:28.400px;top:115.880px;width:397.600px;height:12.120px;background:#dafbe1'></div>
<div class='a' style='left:28.400px;top:115.880px;width:25.600px;height:12.120px;background:#aceebb'></div>
<div class='a' style='left:0;top:115.880px;width:28.400px;height:12.120px;background:#f6f8fa'></div>
<div class='t s' style='left:59.400px;top:119.280px;font-size:7.200px;color:#1f2328'>+</div>
<div class='t s' style='left:28.400px;width:19.800px;text-align:right;top:120.280px;font-size:7.600px;letter-spacing:-0.200px;color:#3b6e4a'>215</div>
<div class='t m' style='left:81.800px;top:119.880px;font-size:8.000px;letter-spacing:-0.870px;color:#3d444d'>          type=<span style='color:#2a3f5f'>&quot;text&quot;</span></div>
<div class='a' style='left:28.400px;top:128.000px;width:397.600px;height:12.120px;background:#dafbe1'></div>
<div class='a' style='left:28.400px;top:128.000px;width:25.600px;height:12.120px;background:#aceebb'></div>
<div class='a' style='left:0;top:128.000px;width:28.400px;height:12.120px;background:#f6f8fa'></div>
<div class='t s' style='left:59.400px;top:131.400px;font-size:7.200px;color:#1f2328'>+</div>
<div class='t s' style='left:28.400px;width:19.800px;text-align:right;top:132.400px;font-size:7.600px;letter-spacing:-0.200px;color:#3b6e4a'>216</div>
<div class='t m' style='left:81.800px;top:132.000px;font-size:8.000px;letter-spacing:-0.870px;color:#3d444d'>          value={searchQuery}</div>
<div class='a' style='left:28.400px;top:140.120px;width:397.600px;height:12.120px;background:#dafbe1'></div>
<div class='a' style='left:28.400px;top:140.120px;width:25.600px;height:12.120px;background:#aceebb'></div>
<div class='a' style='left:0;top:140.120px;width:28.400px;height:12.120px;background:#f6f8fa'></div>
<div class='t s' style='left:59.400px;top:143.520px;font-size:7.200px;color:#1f2328'>+</div>
<div class='t s' style='left:28.400px;width:19.800px;text-align:right;top:144.520px;font-size:7.600px;letter-spacing:-0.200px;color:#3b6e4a'>217</div>
<div class='t m' style='left:81.800px;top:144.120px;font-size:8.000px;letter-spacing:-0.870px;color:#3d444d'>          onChange={e =&gt; setSearchQuery(e.target.value)}</div>
<div class='a' style='left:28.400px;top:152.240px;width:397.600px;height:12.120px;background:#dafbe1'></div>
<div class='a' style='left:28.400px;top:152.240px;width:25.600px;height:12.120px;background:#aceebb'></div>
<div class='a' style='left:0;top:152.240px;width:28.400px;height:12.120px;background:#f6f8fa'></div>
<div class='t s' style='left:59.400px;top:155.640px;font-size:7.200px;color:#1f2328'>+</div>
<div class='t s' style='left:28.400px;width:19.800px;text-align:right;top:156.640px;font-size:7.600px;letter-spacing:-0.200px;color:#3b6e4a'>218</div>
<div class='t m' style='left:81.800px;top:156.240px;font-size:8.000px;letter-spacing:-0.870px;color:#3d444d'>          placeholder=<span style='color:#2a3f5f'>&quot;Search by project, name, PID, or description...&quot;</span></div>
<div class='a' style='left:28.400px;top:164.360px;width:397.600px;height:12.120px;background:#dafbe1'></div>
<div class='a' style='left:28.400px;top:164.360px;width:25.600px;height:12.120px;background:#aceebb'></div>
<div class='a' style='left:0;top:164.360px;width:28.400px;height:12.120px;background:#f6f8fa'></div>
<div class='t s' style='left:59.400px;top:167.760px;font-size:7.200px;color:#1f2328'>+</div>
<div class='t s' style='left:28.400px;width:19.800px;text-align:right;top:168.760px;font-size:7.600px;letter-spacing:-0.200px;color:#3b6e4a'>219</div>
<div class='t m' style='left:81.800px;top:168.360px;font-size:8.000px;letter-spacing:-0.870px;color:#3d444d'>        /&gt;</div>
<div class='a' style='left:28.400px;top:176.480px;width:397.600px;height:12.120px;background:#dafbe1'></div>
<div class='a' style='left:28.400px;top:176.480px;width:25.600px;height:12.120px;background:#aceebb'></div>
<div class='a' style='left:0;top:176.480px;width:28.400px;height:12.120px;background:#f6f8fa'></div>
<div class='t s' style='left:59.400px;top:179.880px;font-size:7.200px;color:#1f2328'>+</div>
<div class='t s' style='left:28.400px;width:19.800px;text-align:right;top:180.880px;font-size:7.600px;letter-spacing:-0.200px;color:#3b6e4a'>220</div>
<div class='t m' style='left:81.800px;top:180.480px;font-size:8.000px;letter-spacing:-0.870px;color:#3d444d'>        {searchQuery &amp;&amp; (</div>
<div class='a' style='left:28.400px;top:188.600px;width:397.600px;height:12.120px;background:#dafbe1'></div>
<div class='a' style='left:28.400px;top:188.600px;width:25.600px;height:12.120px;background:#aceebb'></div>
<div class='a' style='left:0;top:188.600px;width:28.400px;height:12.120px;background:#f6f8fa'></div>
<div class='t s' style='left:59.400px;top:192.000px;font-size:7.200px;color:#1f2328'>+</div>
<div class='t s' style='left:28.400px;width:19.800px;text-align:right;top:193.000px;font-size:7.600px;letter-spacing:-0.200px;color:#3b6e4a'>221</div>
<div class='t m' style='left:81.800px;top:192.600px;font-size:8.000px;letter-spacing:-0.870px;color:#3d444d'>          <span style='color:#24292f'>&lt;button</span></div>
<div class='a' style='left:28.400px;top:200.720px;width:397.600px;height:12.120px;background:#dafbe1'></div>
<div class='a' style='left:28.400px;top:200.720px;width:25.600px;height:12.120px;background:#aceebb'></div>
<div class='a' style='left:0;top:200.720px;width:28.400px;height:12.120px;background:#f6f8fa'></div>
<div class='t s' style='left:59.400px;top:204.120px;font-size:7.200px;color:#1f2328'>+</div>
<div class='t s' style='left:28.400px;width:19.800px;text-align:right;top:205.120px;font-size:7.600px;letter-spacing:-0.200px;color:#3b6e4a'>222</div>
<div class='t m' style='left:81.800px;top:204.720px;font-size:8.000px;letter-spacing:-0.870px;color:#3d444d'>            type=<span style='color:#2a3f5f'>&quot;button&quot;</span></div>
<div class='a' style='left:28.400px;top:212.840px;width:397.600px;height:12.120px;background:#dafbe1'></div>
<div class='a' style='left:28.400px;top:212.840px;width:25.600px;height:12.120px;background:#aceebb'></div>
<div class='a' style='left:0;top:212.840px;width:28.400px;height:12.120px;background:#f6f8fa'></div>
<div class='t s' style='left:59.400px;top:216.240px;font-size:7.200px;color:#1f2328'>+</div>
<div class='t s' style='left:28.400px;width:19.800px;text-align:right;top:217.240px;font-size:7.600px;letter-spacing:-0.200px;color:#3b6e4a'>223</div>
<div class='t m' style='left:81.800px;top:216.840px;font-size:8.000px;letter-spacing:-0.870px;color:#3d444d'>            className={styles.clearSearch}</div>
<div class='a' style='left:28.400px;top:224.960px;width:397.600px;height:12.120px;background:#dafbe1'></div>
<div class='a' style='left:28.400px;top:224.960px;width:25.600px;height:12.120px;background:#aceebb'></div>
<div class='a' style='left:0;top:224.960px;width:28.400px;height:12.120px;background:#f6f8fa'></div>
<div class='t s' style='left:59.400px;top:228.360px;font-size:7.200px;color:#1f2328'>+</div>
<div class='t s' style='left:28.400px;width:19.800px;text-align:right;top:229.360px;font-size:7.600px;letter-spacing:-0.200px;color:#3b6e4a'>224</div>
<div class='t m' style='left:81.800px;top:228.960px;font-size:8.000px;letter-spacing:-0.870px;color:#3d444d'>            onClick={() =&gt; setSearchQuery(<span style='color:#2a3f5f'>&#x27;&#x27;</span>)}</div>
<div class='a' style='left:28.400px;top:237.080px;width:397.600px;height:12.120px;background:#dafbe1'></div>
<div class='a' style='left:28.400px;top:237.080px;width:25.600px;height:12.120px;background:#aceebb'></div>
<div class='a' style='left:0;top:237.080px;width:28.400px;height:12.120px;background:#f6f8fa'></div>
<div class='t s' style='left:59.400px;top:240.480px;font-size:7.200px;color:#1f2328'>+</div>
<div class='t s' style='left:28.400px;width:19.800px;text-align:right;top:241.480px;font-size:7.600px;letter-spacing:-0.200px;color:#3b6e4a'>225</div>
<div class='t m' style='left:81.800px;top:241.080px;font-size:8.000px;letter-spacing:-0.870px;color:#3d444d'>            aria-label=<span style='color:#2a3f5f'>&quot;Clear search&quot;</span></div>
<div class='a' style='left:28.400px;top:249.200px;width:397.600px;height:12.120px;background:#dafbe1'></div>
<div class='a' style='left:28.400px;top:249.200px;width:25.600px;height:12.120px;background:#aceebb'></div>
<div class='a' style='left:0;top:249.200px;width:28.400px;height:12.120px;background:#f6f8fa'></div>
<div class='t s' style='left:59.400px;top:252.600px;font-size:7.200px;color:#1f2328'>+</div>
<div class='t s' style='left:28.400px;width:19.800px;text-align:right;top:253.600px;font-size:7.600px;letter-spacing:-0.200px;color:#3b6e4a'>226</div>
<div class='t m' style='left:81.800px;top:253.200px;font-size:8.000px;letter-spacing:-0.870px;color:#3d444d'>          &gt;</div>
<div class='a' style='left:28.400px;top:261.320px;width:397.600px;height:12.120px;background:#dafbe1'></div>
<div class='a' style='left:28.400px;top:261.320px;width:25.600px;height:12.120px;background:#aceebb'></div>
<div class='a' style='left:0;top:261.320px;width:28.400px;height:12.120px;background:#f6f8fa'></div>
<div class='t s' style='left:59.400px;top:264.720px;font-size:7.200px;color:#1f2328'>+</div>
<div class='t s' style='left:28.400px;width:19.800px;text-align:right;top:265.720px;font-size:7.600px;letter-spacing:-0.200px;color:#3b6e4a'>227</div>
<div class='t m' style='left:81.800px;top:265.320px;font-size:8.000px;letter-spacing:-0.870px;color:#3d444d'>            ×</div>
<div class='a' style='left:28.400px;top:273.440px;width:397.600px;height:12.120px;background:#dafbe1'></div>
<div class='a' style='left:28.400px;top:273.440px;width:25.600px;height:12.120px;background:#aceebb'></div>
<div class='a' style='left:0;top:273.440px;width:28.400px;height:12.120px;background:#f6f8fa'></div>
<div class='t s' style='left:59.400px;top:276.840px;font-size:7.200px;color:#1f2328'>+</div>
<div class='t s' style='left:28.400px;width:19.800px;text-align:right;top:277.840px;font-size:7.600px;letter-spacing:-0.200px;color:#3b6e4a'>228</div>
<div class='t m' style='left:81.800px;top:277.440px;font-size:8.000px;letter-spacing:-0.870px;color:#3d444d'>          <span style='color:#24292f'>&lt;/button</span>&gt;</div>
<div class='a' style='left:28.400px;top:285.560px;width:397.600px;height:12.120px;background:#dafbe1'></div>
<div class='a' style='left:28.400px;top:285.560px;width:25.600px;height:12.120px;background:#aceebb'></div>
<div class='a' style='left:0;top:285.560px;width:28.400px;height:12.120px;background:#f6f8fa'></div>
<div class='t s' style='left:59.400px;top:288.960px;font-size:7.200px;color:#1f2328'>+</div>
<div class='t s' style='left:28.400px;width:19.800px;text-align:right;top:289.960px;font-size:7.600px;letter-spacing:-0.200px;color:#3b6e4a'>229</div>
<div class='t m' style='left:81.800px;top:289.560px;font-size:8.000px;letter-spacing:-0.870px;color:#3d444d'>        )}</div>
<div class='a' style='left:28.400px;top:297.680px;width:397.600px;height:12.120px;background:#dafbe1'></div>
<div class='a' style='left:28.400px;top:297.680px;width:25.600px;height:12.120px;background:#aceebb'></div>
<div class='a' style='left:0;top:297.680px;width:28.400px;height:12.120px;background:#f6f8fa'></div>
<div class='t s' style='left:59.400px;top:301.080px;font-size:7.200px;color:#1f2328'>+</div>
<div class='t s' style='left:28.400px;width:19.800px;text-align:right;top:302.080px;font-size:7.600px;letter-spacing:-0.200px;color:#3b6e4a'>230</div>
<div class='t m' style='left:81.800px;top:301.680px;font-size:8.000px;letter-spacing:-0.870px;color:#3d444d'>      <span style='color:#24292f'>&lt;/div</span>&gt;</div>
<div class='a' style='left:28.400px;top:309.800px;width:397.600px;height:12.120px;background:#dafbe1'></div>
<div class='a' style='left:28.400px;top:309.800px;width:25.600px;height:12.120px;background:#aceebb'></div>
<div class='a' style='left:0;top:309.800px;width:28.400px;height:12.120px;background:#f6f8fa'></div>
<div class='t s' style='left:59.400px;top:313.200px;font-size:7.200px;color:#1f2328'>+</div>
<div class='t s' style='left:28.400px;width:19.800px;text-align:right;top:314.200px;font-size:7.600px;letter-spacing:-0.200px;color:#3b6e4a'>231</div>
<div class='t m' style='left:81.800px;top:313.800px;font-size:8.000px;letter-spacing:-0.870px;color:#3d444d'></div>
<div class='a' style='left:28.400px;top:321.920px;width:397.600px;height:12.120px;background:#dafbe1'></div>
<div class='a' style='left:28.400px;top:321.920px;width:25.600px;height:12.120px;background:#aceebb'></div>
<div class='a' style='left:0;top:321.920px;width:28.400px;height:12.120px;background:#f6f8fa'></div>
<div class='t s' style='left:59.400px;top:325.320px;font-size:7.200px;color:#1f2328'>+</div>
<div class='t s' style='left:28.400px;width:19.800px;text-align:right;top:326.320px;font-size:7.600px;letter-spacing:-0.200px;color:#3b6e4a'>232</div>
<div class='t m' style='left:81.800px;top:325.920px;font-size:8.000px;letter-spacing:-0.870px;color:#3d444d'>      <span style='color:#24292f'>&lt;div</span> className={styles.resultCount}&gt;</div>
<div class='a' style='left:28.400px;top:334.040px;width:397.600px;height:12.120px;background:#dafbe1'></div>
<div class='a' style='left:28.400px;top:334.040px;width:25.600px;height:12.120px;background:#aceebb'></div>
<div class='a' style='left:0;top:334.040px;width:28.400px;height:12.120px;background:#f6f8fa'></div>
<div class='t s' style='left:59.400px;top:337.440px;font-size:7.200px;color:#1f2328'>+</div>
<div class='t s' style='left:28.400px;width:19.800px;text-align:right;top:338.440px;font-size:7.600px;letter-spacing:-0.200px;color:#3b6e4a'>233</div>
<div class='t m' style='left:81.800px;top:338.040px;font-size:8.000px;letter-spacing:-0.870px;color:#3d444d'>        {totalItems} {totalItems === 1 ? <span style='color:#2a3f5f'>&#x27;material&#x27;</span> : <span style='color:#2a3f5f'>&#x27;materials&#x27;</span>} found</div>
<div class='a' style='left:28.400px;top:346.160px;width:397.600px;height:12.120px;background:#dafbe1'></div>
<div class='a' style='left:28.400px;top:346.160px;width:25.600px;height:12.120px;background:#aceebb'></div>
<div class='a' style='left:0;top:346.160px;width:28.400px;height:12.120px;background:#f6f8fa'></div>
<div class='t s' style='left:59.400px;top:349.560px;font-size:7.200px;color:#1f2328'>+</div>
<div class='t s' style='left:28.400px;width:19.800px;text-align:right;top:350.560px;font-size:7.600px;letter-spacing:-0.200px;color:#3b6e4a'>234</div>
<div class='t m' style='left:81.800px;top:350.160px;font-size:8.000px;letter-spacing:-0.870px;color:#3d444d'>      <span style='color:#24292f'>&lt;/div</span>&gt;</div>
<div class='a' style='left:28.400px;top:358.280px;width:397.600px;height:12.120px;background:#dafbe1'></div>
<div class='a' style='left:28.400px;top:358.280px;width:25.600px;height:12.120px;background:#aceebb'></div>
<div class='a' style='left:0;top:358.280px;width:28.400px;height:12.120px;background:#f6f8fa'></div>
<div class='t s' style='left:59.400px;top:361.680px;font-size:7.200px;color:#1f2328'>+</div>
<div class='t s' style='left:28.400px;width:19.800px;text-align:right;top:362.680px;font-size:7.600px;letter-spacing:-0.200px;color:#3b6e4a'>235</div>
<div class='t m' style='left:81.800px;top:362.280px;font-size:8.000px;letter-spacing:-0.870px;color:#3d444d'>    <span style='color:#24292f'>&lt;/div</span>&gt;</div>
<div class='a' style='left:28.400px;top:370.400px;width:397.600px;height:12.120px;background:#dafbe1'></div>
<div class='a' style='left:28.400px;top:370.400px;width:25.600px;height:12.120px;background:#aceebb'></div>
<div class='a' style='left:0;top:370.400px;width:28.400px;height:12.120px;background:#f6f8fa'></div>
<div class='t s' style='left:59.400px;top:373.800px;font-size:7.200px;color:#1f2328'>+</div>
<div class='t s' style='left:28.400px;width:19.800px;text-align:right;top:374.800px;font-size:7.600px;letter-spacing:-0.200px;color:#3b6e4a'>236</div>
<div class='t m' style='left:81.800px;top:374.400px;font-size:8.000px;letter-spacing:-0.870px;color:#3d444d'></div>
<div class='t s' style='left:28.400px;width:19.800px;text-align:right;top:386.920px;font-size:7.600px;letter-spacing:-0.200px;color:#57606a'>237</div>
<div class='t m' style='left:81.800px;top:386.520px;font-size:8.000px;letter-spacing:-0.870px;color:#3d444d'>    {filteredItems &amp;&amp; (</div>
<div class='t s' style='left:28.400px;width:19.800px;text-align:right;top:399.040px;font-size:7.600px;letter-spacing:-0.200px;color:#57606a'>238</div>
<div class='t m' style='left:81.800px;top:398.640px;font-size:8.000px;letter-spacing:-0.870px;color:#3d444d'>      <span style='color:#24292f'>&lt;ItemTable</span></div>
<div class='t s' style='left:28.400px;width:19.800px;text-align:right;top:411.160px;font-size:7.600px;letter-spacing:-0.200px;color:#57606a'>239</div>
<div class='t m' style='left:81.800px;top:410.760px;font-size:8.000px;letter-spacing:-0.870px;color:#3d444d'>        selectedProject={selectedProject}</div>
<div class='t s' style='left:28.400px;width:19.800px;text-align:right;top:423.280px;font-size:7.600px;letter-spacing:-0.200px;color:#57606a'>240</div>
<div class='t m' style='left:81.800px;top:422.880px;font-size:8.000px;letter-spacing:-0.870px;color:#3d444d'>        selectedItem={selectedItem}</div>
<div class='a' style='left:28.400px;top:431.000px;width:397.600px;height:12.120px;background:#dafbe1'></div>
<div class='a' style='left:28.400px;top:431.000px;width:25.600px;height:12.120px;background:#aceebb'></div>
<div class='a' style='left:0;top:431.000px;width:28.400px;height:12.120px;background:#f6f8fa'></div>
<div class='t s' style='left:59.400px;top:434.400px;font-size:7.200px;color:#1f2328'>+</div>
<div class='t s' style='left:28.400px;width:19.800px;text-align:right;top:435.400px;font-size:7.600px;letter-spacing:-0.200px;color:#3b6e4a'>241</div>
<div class='t m' style='left:81.800px;top:435.000px;font-size:8.000px;letter-spacing:-0.870px;color:#3d444d'>        selectedTab={selectedTab}</div>
</div>
<div class='a' style='left:220.0px;top:227.0px;width:430.600px;height:438.400px;background:#181818;overflow:hidden;transform:scale(0.500000);transform-origin:0 0;will-change:transform'>
<div class='a' style='left:0;top:0;width:430.600px;height:12.600px;background:#181818;border-bottom:1.000px solid #2b2b2b'></div>
<svg class='a' style='left:4.600px;top:3.200px' width='4.000' height='2.800' viewBox='0 0 2 1.4'><path d='M0.2 0.2L1 1.1L1.8 0.2' stroke='#888' stroke-width='0.700' fill='none'/></svg>
<svg class='a' style='left:44.000px;top:0.800px' width='26.000' height='8.000' viewBox='0 0 13 4'><path d='M0.5 2H3.8M1.8 0.8L0.5 2L1.8 3.2M8.7 2H12M10.7 0.8L12 2L10.7 3.2' stroke='#9a9a9a' stroke-width='0.700' fill='none'/></svg>
<div class='a' style='left:75.600px;top:-1.000px;width:328.400px;height:13.600px;background:#222222;border:1.000px solid #2f2f2f;border-radius:3.000px'></div>
<svg class='a' style='left:221.000px;top:2.400px' width='8.000' height='8.000' viewBox='0 0 4 4'><circle cx='2.3' cy='1.7' r='1.2' stroke='#d0d0d0' stroke-width='1.100' fill='none'/><path d='M1.4 2.6L0.4 3.6' stroke='#d0d0d0' stroke-width='1.200'/></svg><div class='t s' style='left:229.600px;top:2.200px;font-size:8.000px;color:#e0e0e0'>HRMest</div>
<div class='a' style='left:411.000px;top:2.400px;width:7.200px;height:5.600px;border:1.200px solid #cccccc;border-radius:1.200px'></div>
<div class='t s' style='left:420.000px;top:3.600px;font-size:5.200px;color:#9d9d9d'>▾</div>
<div class='a' style='left:0;top:12.600px;width:30.000px;height:438.400px;background:#181818;border-right:1.000px solid #2b2b2b'></div>
<div class='a' style='left:11.200px;top:26.400px;width:10.800px;height:1.000px;background:#6a6a6a'></div>
<div class='a' style='left:0.000px;top:400.400px;width:30.000px;height:1.000px;background:#2b2b2b'></div>
<div class='t s' style='left:44.000px;top:24.800px;font-size:6.800px;color:#9d9d9d;letter-spacing:0.100px'>OUTPUT</div>
<div class='t s' style='left:85.400px;top:24.800px;font-size:6.800px;color:#e7e7e7;letter-spacing:0.000px'>TERMINAL</div>
<div class='a' style='left:119.200px;top:21.600px;width:12.400px;height:10.800px;border-radius:5.400px;background:#3591ea'></div>
<div class='t s' style='left:123.800px;top:24.000px;font-size:6.400px;color:#d8ecff'>1</div>
<div class='a' style='left:84.600px;top:32.600px;width:32.000px;height:1.000px;background:#35516e'></div>
<div class='t s' style='left:146.000px;top:24.800px;font-size:6.800px;color:#9d9d9d;letter-spacing:-0.100px'>DEBUG CONSOLE</div>
<div class='t s' style='left:215.000px;top:24.800px;font-size:6.800px;color:#9d9d9d;letter-spacing:0.000px'>PORTS</div>
<div class='a' style='left:31.000px;top:37.200px;width:430.600px;height:13.600px;background:#282828'></div>
<svg class='a' style='left:35.200px;top:42.800px' width='4.400' height='3.200' viewBox='0 0 2.2 1.6'><path d='M0.2 0.2L1.1 1.2L2 0.2' stroke='#c8c8c8' stroke-width='0.800' fill='none'/></svg><div class='t s' style='left:42.400px;top:40.400px;font-size:7.000px;color:#d8d8d8;font-weight:bold'>TERMINAL</div>
<div class='t m' style='left:44.000px;top:59.300px;font-size:8.600px;letter-spacing:-0.760px;color:#e4e4e4'><span style='color:#34a05e'>Prashant_Rangani@DESKTOP-CL1DN4F</span> <span style='color:#b24fd6'>MINGW64</span> <span style='color:#d8d43a'>~/Documents/Chatbots/Chat/HRMest</span> <span style='color:#2f96c2'>(dewtal-Ridaa)</span></div>
<div class='t m' style='left:44.000px;top:69.920px;font-size:8.600px;letter-spacing:-0.760px;color:#e4e4e4'>$ npm run dev</div>
<div class='t m' style='left:44.000px;top:80.540px;font-size:8.600px;letter-spacing:-0.760px;color:#e4e4e4'>(Use `node --trace-deprecation ...` to show where the warning was created)</div>
<div class='t m' style='left:44.000px;top:91.160px;font-size:8.600px;letter-spacing:-0.760px;color:#e4e4e4'>(node:1448) DeprecationWarning: collection.ensureIndex is deprecated. Use createIndexes instead.</div>
<div class='t m' style='left:44.000px;top:101.780px;font-size:8.600px;letter-spacing:-0.760px;color:#e4e4e4'>{&quot;serverUrl&quot;:null,&quot;lastSync&quot;:&quot;2025-05-04T08:16:02.261Z&quot;,&quot;userEmail&quot;:&quot;dewtal.mangat@gmail.com&quot;,</div>
<div class='t m' style='left:44.000px;top:112.400px;font-size:8.600px;letter-spacing:-0.760px;color:#e4e4e4'> b3d000001b4&quot;,&quot;status&quot;:&quot;locked&quot;}</div>
<div class='t m' style='left:44.000px;top:123.020px;font-size:8.600px;letter-spacing:-0.760px;color:#e4e4e4'>Ahr1pcuAmTwFqJBrnMxdsaHdAeavrcRrWdGnB1Rb1wdyIh1cAnXOgFbgwdxQuZ8TlH8sgRn4XgpreshZxQ8rW4——</div>
<div class='t m' style='left:44.000px;top:133.640px;font-size:8.600px;letter-spacing:-0.760px;color:#e4e4e4'>Error: Cannot read properties of undefined (reading &#x27;username&#x27;)</div>
<div class='t m' style='left:44.000px;top:144.260px;font-size:8.600px;letter-spacing:-0.760px;color:#e4e4e4'>[]</div>
<div class='t m' style='left:44.000px;top:154.880px;font-size:8.600px;letter-spacing:-0.760px;color:#e4e4e4'>[]</div>
<div class='t m' style='left:44.000px;top:165.500px;font-size:8.600px;letter-spacing:-0.760px;color:#e4e4e4'>(1:0)27,ac-rgrlnea-shard-00-00.jff3ltm.mongodb.net:27017,ac-rgrlnea-shard-00-01.jff3ltm.mongodb.net</div>
<div class='t m' style='left:44.000px;top:176.120px;font-size:8.600px;letter-spacing:-0.760px;color:#e4e4e4'>abb8dnrgliclRebattion rtWpT7 shard 0Bn1n4HGIccefnsRamaIqrtSySapp5amnHBPProdDBcluster0mongo</div>
<div class='t m' style='left:44.000px;top:186.740px;font-size:8.600px;letter-spacing:-0.760px;color:#e4e4e4'>js will throw an error.</div>
<div class='t m' style='left:44.000px;top:197.360px;font-size:8.600px;letter-spacing:-0.760px;color:#e4e4e4'>(Use `node --trace-deprecation ...` to show where the warning was created)</div>
<div class='t m' style='left:44.000px;top:207.980px;font-size:8.600px;letter-spacing:-0.760px;color:#e4e4e4'>(node:1980) DeprecationWarning: collection.ensureIndex is deprecated. Use createIndexes instead.</div>
<div class='t m' style='left:44.000px;top:218.600px;font-size:8.600px;letter-spacing:-0.760px;color:#e4e4e4'>{&quot;serverUrl&quot;:null,&quot;lastSync&quot;:&quot;2025-05-04T08:53:02.261Z&quot;,&quot;userEmail&quot;:&quot;dewtal.mangat@gmail.com&quot;,</div>
<div class='t m' style='left:44.000px;top:229.220px;font-size:8.600px;letter-spacing:-0.760px;color:#e4e4e4'>-b3d000001b4&quot;,&quot;status&quot;:&quot;locked&quot;}</div>
<div class='t m' style='left:44.000px;top:239.840px;font-size:8.600px;letter-spacing:-0.760px;color:#e4e4e4'>Ab0ptmAWTGoaljQ8H4B2eFAF4beoHWuHRVWdcGbHSk?cfYf9zIdXQeIgf6gpOvQuDtZlOgMHQprawKe4pQrzJ7——</div>
<div class='t m' style='left:44.000px;top:250.460px;font-size:8.600px;letter-spacing:-0.760px;color:#e4e4e4'>js will throw an error.</div>
<div class='t m' style='left:44.000px;top:261.080px;font-size:8.600px;letter-spacing:-0.760px;color:#e4e4e4'>(Use `node --trace-deprecation ...` to show where the warning was created)</div>
<div class='t m' style='left:44.000px;top:271.700px;font-size:8.600px;letter-spacing:-0.760px;color:#e4e4e4'>(node:1980) DeprecationWarning: collection.ensureIndex is deprecated. Use createIndexes instead.</div>
<div class='t m' style='left:44.000px;top:282.320px;font-size:8.600px;letter-spacing:-0.760px;color:#e4e4e4'>{&quot;serverUrl&quot;:null,&quot;lastSync&quot;:&quot;2025-05-04T08:53:02.261Z&quot;,&quot;userEmail&quot;:&quot;dewtal.mangat@gmail.com&quot;,</div>
<div class='t m' style='left:44.000px;top:292.940px;font-size:8.600px;letter-spacing:-0.760px;color:#e4e4e4'>-b3d000001b4&quot;,&quot;status&quot;:&quot;locked&quot;}</div>
<div class='t m' style='left:44.000px;top:303.560px;font-size:8.600px;letter-spacing:-0.760px;color:#e4e4e4'>Ab0ptmAWTGoaljQ8H4B2eFAF4beoHWuHRVWdcGbHSk?cfYf9zIdXQeIgf6gpOvQuDtZlOgMHQprawKe4pQrzJ7——</div>
<div class='t m' style='left:44.000px;top:314.180px;font-size:8.600px;letter-spacing:-0.760px;color:#e4e4e4'>(node:1980) DeprecationWarning: collection.ensureIndex is deprecated. Use createIndexes instead.</div>
<div class='t m' style='left:44.000px;top:324.800px;font-size:8.600px;letter-spacing:-0.760px;color:#e4e4e4'>{&quot;serverUrl&quot;:null,&quot;lastSync&quot;:&quot;2025-05-04T08:53:02.261Z&quot;,&quot;userEmail&quot;:&quot;dewtal.mangat@gmail.com&quot;,</div>
<div class='t m' style='left:44.000px;top:335.420px;font-size:8.600px;letter-spacing:-0.760px;color:#e4e4e4'>-b3d000001b4&quot;,&quot;status&quot;:&quot;locked&quot;}</div>
<div class='t m' style='left:44.000px;top:346.040px;font-size:8.600px;letter-spacing:-0.760px;color:#e4e4e4'>Ab0ptmAWTGoaljQ8H4B2eFAF4beoHWuHRVWdcGbHSk?cfYf9zIdXQeIgf6gpOvQuDtZlOgMHQprawKe4pQrzJ7——</div>
<div class='t m' style='left:44.000px;top:356.660px;font-size:8.600px;letter-spacing:-0.760px;color:#e4e4e4'>-b3d000001b4&quot;,&quot;status&quot;:&quot;locked&quot;}</div>
<div class='t m' style='left:44.000px;top:367.280px;font-size:8.600px;letter-spacing:-0.760px;color:#e4e4e4'>Ab0ptmAWTGoaljQ8H4B2eFAF4beoHWuHRVWdcGbHSk?cfYf9zIdXQeIgf6gpOvQuDtZlOgMHQprawKe4pQrzJ7——</div>
<div class='t m' style='left:44.000px;top:377.900px;font-size:8.600px;letter-spacing:-0.760px;color:#e4e4e4'>Ab0ptmAWTGoaljQ8H4B2eFAF4beoHWuHRVWdcGbHSk?cfYf9zIdXQeIgf6gpOvQuDtZlOgMHQprawKe4pQrzJ7——</div>
<div class='t m' style='left:44.000px;top:388.520px;font-size:8.600px;letter-spacing:-0.760px;color:#e4e4e4'>Error: Cannot read properties of undefined (reading &#x27;username&#x27;)</div>
<div class='t m' style='left:44.000px;top:399.140px;font-size:8.600px;letter-spacing:-0.760px;color:#e4e4e4'>[]</div>
<div class='t m' style='left:44.000px;top:409.760px;font-size:8.600px;letter-spacing:-0.760px;color:#e4e4e4'>[]</div>
<div class='t m' style='left:44.000px;top:420.380px;font-size:8.600px;letter-spacing:-0.760px;color:#e4e4e4'>[]</div>
<svg class='a' style='left:4.000px;top:431.600px' width='8.000' height='6.800' viewBox='0 0 4 3.4'><path d='M0.4 3V0.6M0.4 0.6L3.4 3M3.4 3V1.6' stroke='#d8d8d8' stroke-width='1.100' fill='none'/></svg>
<svg class='a' style='left:21.000px;top:431.800px' width='8.800' height='6.400' viewBox='0 0 4.4 3.2'><path d='M1 3H3.6A0.9 0.9 0 0 0 3.6 1.3A1.3 1.3 0 0 0 1.2 1.2A0.9 0.9 0 0 0 1 3Z' fill='#d8d8d8'/></svg>
<div class='t s' style='left:39.600px;top:431.000px;font-size:7.600px;color:#dedede;letter-spacing:0.400px'>⊗ 0 ⚠ 12</div>
<div class='t s' style='left:87.000px;top:431.000px;font-size:7.600px;color:#dedede'>⚐ Live Share</div>
<div class='t s' style='left:324.000px;top:431.000px;font-size:7.600px;color:#dedede'>Ln 381, Col 13</div>
<div class='t s' style='left:381.000px;top:431.000px;font-size:7.600px;color:#dedede'>Spaces: 4</div>
<div class='t s' style='left:419.600px;top:431.000px;font-size:7.600px;color:#dedede'>{}</div>
</div>
<div class='a' style='left:439.0px;top:227.0px;width:425.400px;height:438.400px;background:#181818;overflow:hidden;transform:scale(0.500000);transform-origin:0 0;will-change:transform'>
<div class='a' style='left:0;top:0;width:425.400px;height:12.600px;background:#181818;border-bottom:1.000px solid #2b2b2b'></div>
<svg class='a' style='left:4.600px;top:3.200px' width='4.000' height='2.800' viewBox='0 0 2 1.4'><path d='M0.2 0.2L1 1.1L1.8 0.2' stroke='#888' stroke-width='0.700' fill='none'/></svg>
<svg class='a' style='left:44.000px;top:0.800px' width='26.000' height='8.000' viewBox='0 0 13 4'><path d='M0.5 2H3.8M1.8 0.8L0.5 2L1.8 3.2M8.7 2H12M10.7 0.8L12 2L10.7 3.2' stroke='#9a9a9a' stroke-width='0.700' fill='none'/></svg>
<div class='a' style='left:75.600px;top:-1.000px;width:328.400px;height:13.600px;background:#222222;border:1.000px solid #2f2f2f;border-radius:3.000px'></div>
<svg class='a' style='left:221.000px;top:2.400px' width='8.000' height='8.000' viewBox='0 0 4 4'><circle cx='2.3' cy='1.7' r='1.2' stroke='#d0d0d0' stroke-width='1.100' fill='none'/><path d='M1.4 2.6L0.4 3.6' stroke='#d0d0d0' stroke-width='1.200'/></svg><div class='t s' style='left:229.600px;top:2.200px;font-size:8.000px;color:#e0e0e0'>HRMest</div>
<div class='a' style='left:411.000px;top:2.400px;width:7.200px;height:5.600px;border:1.200px solid #cccccc;border-radius:1.200px'></div>
<div class='t s' style='left:420.000px;top:3.600px;font-size:5.200px;color:#9d9d9d'>▾</div>
<div class='a' style='left:0;top:12.600px;width:30.000px;height:438.400px;background:#181818;border-right:1.000px solid #2b2b2b'></div>
<div class='a' style='left:11.200px;top:26.400px;width:10.800px;height:1.000px;background:#6a6a6a'></div>
<div class='a' style='left:0.000px;top:400.400px;width:30.000px;height:1.000px;background:#2b2b2b'></div>
<div class='t s' style='left:44.000px;top:24.800px;font-size:6.800px;color:#9d9d9d;letter-spacing:0.100px'>OUTPUT</div>
<div class='t s' style='left:85.400px;top:24.800px;font-size:6.800px;color:#e7e7e7;letter-spacing:0.000px'>TERMINAL</div>
<div class='a' style='left:119.200px;top:21.600px;width:12.400px;height:10.800px;border-radius:5.400px;background:#3591ea'></div>
<div class='t s' style='left:123.800px;top:24.000px;font-size:6.400px;color:#d8ecff'>1</div>
<div class='a' style='left:84.600px;top:32.600px;width:32.000px;height:1.000px;background:#35516e'></div>
<div class='t s' style='left:146.000px;top:24.800px;font-size:6.800px;color:#9d9d9d;letter-spacing:-0.100px'>DEBUG CONSOLE</div>
<div class='t s' style='left:215.000px;top:24.800px;font-size:6.800px;color:#9d9d9d;letter-spacing:0.000px'>PORTS</div>
<div class='a' style='left:31.000px;top:37.200px;width:425.400px;height:13.600px;background:#282828'></div>
<svg class='a' style='left:35.200px;top:42.800px' width='4.400' height='3.200' viewBox='0 0 2.2 1.6'><path d='M0.2 0.2L1.1 1.2L2 0.2' stroke='#c8c8c8' stroke-width='0.800' fill='none'/></svg><div class='t s' style='left:42.400px;top:40.400px;font-size:7.000px;color:#d8d8d8;font-weight:bold'>TERMINAL</div>
<div class='t m' style='left:44.000px;top:59.300px;font-size:8.600px;letter-spacing:-0.760px;color:#e4e4e4'><span style='color:#34a05e'>Prashant_Rangani@DESKTOP-CL1DN4F</span> <span style='color:#b24fd6'>MINGW64</span> <span style='color:#d8d43a'>~/Documents/Chatbots/Chat/HRMest</span> <span style='color:#2f96c2'>(dewtal-Ridaa)</span></div>
<div class='t m' style='left:44.000px;top:69.920px;font-size:8.600px;letter-spacing:-0.760px;color:#e4e4e4'>$ npm run dev</div>
<div class='t m' style='left:44.000px;top:80.540px;font-size:8.600px;letter-spacing:-0.760px;color:#e4e4e4'>(Use `node --trace-deprecation ...` to show where the warning was created)</div>
<div class='t m' style='left:44.000px;top:91.160px;font-size:8.600px;letter-spacing:-0.760px;color:#e4e4e4'>(node:1448) DeprecationWarning: collection.ensureIndex is deprecated. Use createIndexes instead.</div>
<div class='t m' style='left:44.000px;top:101.780px;font-size:8.600px;letter-spacing:-0.760px;color:#e4e4e4'>{&quot;serverUrl&quot;:null,&quot;lastSync&quot;:&quot;2025-05-04T08:16:02.261Z&quot;,&quot;userEmail&quot;:&quot;dewtal.mangat@gmail.com&quot;,</div>
<div class='t m' style='left:44.000px;top:112.400px;font-size:8.600px;letter-spacing:-0.760px;color:#e4e4e4'> b3d000001b4&quot;,&quot;status&quot;:&quot;locked&quot;}</div>
<div class='t m' style='left:44.000px;top:123.020px;font-size:8.600px;letter-spacing:-0.760px;color:#e4e4e4'>Ahr1pcuAmTwFqJBrnMxdsaHdAeavrcRrWdGnB1Rb1wdyIh1cAnXOgFbgwdxQuZ8TlH8sgRn4XgpreshZxQ8rW4——</div>
<div class='t m' style='left:44.000px;top:133.640px;font-size:8.600px;letter-spacing:-0.760px;color:#e4e4e4'>Error: Cannot read properties of undefined (reading &#x27;username&#x27;)</div>
<div class='t m' style='left:44.000px;top:144.260px;font-size:8.600px;letter-spacing:-0.760px;color:#e4e4e4'>[]</div>
<div class='t m' style='left:44.000px;top:154.880px;font-size:8.600px;letter-spacing:-0.760px;color:#e4e4e4'>[]</div>
<div class='t m' style='left:44.000px;top:165.500px;font-size:8.600px;letter-spacing:-0.760px;color:#e4e4e4'>(1:0)27,ac-rgrlnea-shard-00-00.jff3ltm.mongodb.net:27017,ac-rgrlnea-shard-00-01.jff3ltm.mongodb.net</div>
<div class='t m' style='left:44.000px;top:176.120px;font-size:8.600px;letter-spacing:-0.760px;color:#e4e4e4'>abb8dnrgliclRebattion rtWpT7 shard 0Bn1n4HGIccefnsRamaIqrtSySapp5amnHBPProdDBcluster0mongo</div>
<div class='t m' style='left:44.000px;top:186.740px;font-size:8.600px;letter-spacing:-0.760px;color:#e4e4e4'>js will throw an error.</div>
<div class='t m' style='left:44.000px;top:197.360px;font-size:8.600px;letter-spacing:-0.760px;color:#e4e4e4'>(Use `node --trace-deprecation ...` to show where the warning was created)</div>
<div class='t m' style='left:44.000px;top:207.980px;font-size:8.600px;letter-spacing:-0.760px;color:#e4e4e4'>(node:1980) DeprecationWarning: collection.ensureIndex is deprecated. Use createIndexes instead.</div>
<div class='t m' style='left:44.000px;top:218.600px;font-size:8.600px;letter-spacing:-0.760px;color:#e4e4e4'>{&quot;serverUrl&quot;:null,&quot;lastSync&quot;:&quot;2025-05-04T08:53:02.261Z&quot;,&quot;userEmail&quot;:&quot;dewtal.mangat@gmail.com&quot;,</div>
<div class='t m' style='left:44.000px;top:229.220px;font-size:8.600px;letter-spacing:-0.760px;color:#e4e4e4'>-b3d000001b4&quot;,&quot;status&quot;:&quot;locked&quot;}</div>
<div class='t m' style='left:44.000px;top:239.840px;font-size:8.600px;letter-spacing:-0.760px;color:#e4e4e4'>Ab0ptmAWTGoaljQ8H4B2eFAF4beoHWuHRVWdcGbHSk?cfYf9zIdXQeIgf6gpOvQuDtZlOgMHQprawKe4pQrzJ7——</div>
<div class='t m' style='left:44.000px;top:250.460px;font-size:8.600px;letter-spacing:-0.760px;color:#e4e4e4'>js will throw an error.</div>
<div class='t m' style='left:44.000px;top:261.080px;font-size:8.600px;letter-spacing:-0.760px;color:#e4e4e4'>(Use `node --trace-deprecation ...` to show where the warning was created)</div>
<div class='t m' style='left:44.000px;top:271.700px;font-size:8.600px;letter-spacing:-0.760px;color:#e4e4e4'>(node:1980) DeprecationWarning: collection.ensureIndex is deprecated. Use createIndexes instead.</div>
<div class='t m' style='left:44.000px;top:282.320px;font-size:8.600px;letter-spacing:-0.760px;color:#e4e4e4'>{&quot;serverUrl&quot;:null,&quot;lastSync&quot;:&quot;2025-05-04T08:53:02.261Z&quot;,&quot;userEmail&quot;:&quot;dewtal.mangat@gmail.com&quot;,</div>
<div class='t m' style='left:44.000px;top:292.940px;font-size:8.600px;letter-spacing:-0.760px;color:#e4e4e4'>-b3d000001b4&quot;,&quot;status&quot;:&quot;locked&quot;}</div>
<div class='t m' style='left:44.000px;top:303.560px;font-size:8.600px;letter-spacing:-0.760px;color:#e4e4e4'>Ab0ptmAWTGoaljQ8H4B2eFAF4beoHWuHRVWdcGbHSk?cfYf9zIdXQeIgf6gpOvQuDtZlOgMHQprawKe4pQrzJ7——</div>
<div class='t m' style='left:44.000px;top:314.180px;font-size:8.600px;letter-spacing:-0.760px;color:#e4e4e4'>(node:1980) DeprecationWarning: collection.ensureIndex is deprecated. Use createIndexes instead.</div>
<div class='t m' style='left:44.000px;top:324.800px;font-size:8.600px;letter-spacing:-0.760px;color:#e4e4e4'>{&quot;serverUrl&quot;:null,&quot;lastSync&quot;:&quot;2025-05-04T08:53:02.261Z&quot;,&quot;userEmail&quot;:&quot;dewtal.mangat@gmail.com&quot;,</div>
<div class='t m' style='left:44.000px;top:335.420px;font-size:8.600px;letter-spacing:-0.760px;color:#e4e4e4'>-b3d000001b4&quot;,&quot;status&quot;:&quot;locked&quot;}</div>
<div class='t m' style='left:44.000px;top:346.040px;font-size:8.600px;letter-spacing:-0.760px;color:#e4e4e4'>Ab0ptmAWTGoaljQ8H4B2eFAF4beoHWuHRVWdcGbHSk?cfYf9zIdXQeIgf6gpOvQuDtZlOgMHQprawKe4pQrzJ7——</div>
<div class='t m' style='left:44.000px;top:356.660px;font-size:8.600px;letter-spacing:-0.760px;color:#e4e4e4'>-b3d000001b4&quot;,&quot;status&quot;:&quot;locked&quot;}</div>
<div class='t m' style='left:44.000px;top:367.280px;font-size:8.600px;letter-spacing:-0.760px;color:#e4e4e4'>Ab0ptmAWTGoaljQ8H4B2eFAF4beoHWuHRVWdcGbHSk?cfYf9zIdXQeIgf6gpOvQuDtZlOgMHQprawKe4pQrzJ7——</div>
<div class='t m' style='left:44.000px;top:377.900px;font-size:8.600px;letter-spacing:-0.760px;color:#e4e4e4'>Ab0ptmAWTGoaljQ8H4B2eFAF4beoHWuHRVWdcGbHSk?cfYf9zIdXQeIgf6gpOvQuDtZlOgMHQprawKe4pQrzJ7——</div>
<div class='t m' style='left:44.000px;top:388.520px;font-size:8.600px;letter-spacing:-0.760px;color:#e4e4e4'>Error: Cannot read properties of undefined (reading &#x27;username&#x27;)</div>
<div class='t m' style='left:44.000px;top:399.140px;font-size:8.600px;letter-spacing:-0.760px;color:#e4e4e4'>[]</div>
<div class='t m' style='left:44.000px;top:409.760px;font-size:8.600px;letter-spacing:-0.760px;color:#e4e4e4'>[]</div>
<div class='t m' style='left:44.000px;top:420.380px;font-size:8.600px;letter-spacing:-0.760px;color:#e4e4e4'>[]</div>
<svg class='a' style='left:4.000px;top:431.600px' width='8.000' height='6.800' viewBox='0 0 4 3.4'><path d='M0.4 3V0.6M0.4 0.6L3.4 3M3.4 3V1.6' stroke='#d8d8d8' stroke-width='1.100' fill='none'/></svg>
<svg class='a' style='left:21.000px;top:431.800px' width='8.800' height='6.400' viewBox='0 0 4.4 3.2'><path d='M1 3H3.6A0.9 0.9 0 0 0 3.6 1.3A1.3 1.3 0 0 0 1.2 1.2A0.9 0.9 0 0 0 1 3Z' fill='#d8d8d8'/></svg>
<div class='t s' style='left:39.600px;top:431.000px;font-size:7.600px;color:#dedede;letter-spacing:0.400px'>⊗ 0 ⚠ 12</div>
<div class='t s' style='left:87.000px;top:431.000px;font-size:7.600px;color:#dedede'>⚐ Live Share</div>
<div class='t s' style='left:324.000px;top:431.000px;font-size:7.600px;color:#dedede'>Ln 381, Col 13</div>
<div class='t s' style='left:381.000px;top:431.000px;font-size:7.600px;color:#dedede'>Spaces: 4</div>
<div class='t s' style='left:419.600px;top:431.000px;font-size:7.600px;color:#dedede'>{}</div>
</div>
</body></html>
